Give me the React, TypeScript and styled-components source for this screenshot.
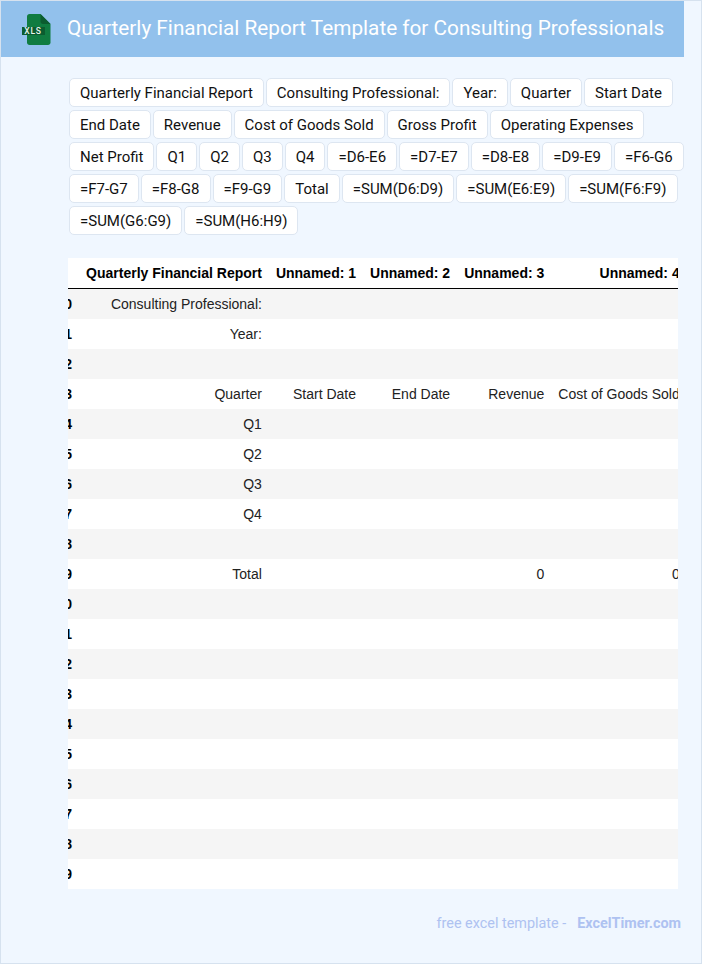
import React from "react";
import styled, { createGlobalStyle } from "styled-components";

const GlobalStyle = createGlobalStyle`
  html, body {
    margin: 0;
    padding: 0;
    background: #f0f7ff;
  }
`;

const Page = styled.div`
  box-sizing: border-box;
  width: 702px;
  height: 964px;
  overflow: hidden;
  background: #f0f7ff;
  border: 1px solid #d6e2ef;
  font-family: Roboto, sans-serif;
`;

const Header = styled.header`
  width: 683px;
  height: 56px;
  display: flex;
  align-items: center;
  background: #92c1ec;
`;

const LogoBox = styled.div`
  width: 66px;
  padding-left: 21px;
  box-sizing: border-box;
  display: flex;
  align-items: center;
`;

const Title = styled.h1`
  margin: 0 0 3px;
  font-size: 20.75px;
  font-weight: 400;
  color: #fff;
  white-space: nowrap;
`;

const Chips = styled.div`
  display: flex;
  flex-wrap: wrap;
  gap: 3px 2px;
  width: 620px;
  margin: 21px 0 0 68px;
`;

const Chip = styled.span`
  box-sizing: border-box;
  height: 29px;
  padding: 0 10px;
  display: flex;
  align-items: center;
  background: #fff;
  border: 1px solid #dde6f1;
  border-radius: 5px;
  font-size: 15px;
  color: #111;
  white-space: nowrap;
`;

const TableClip = styled.div`
  width: 610px;
  margin: 23px 0 0 67px;
  overflow: hidden;
`;

const Table = styled.table`
  margin-left: -18.5px;
  border-collapse: separate;
  border-spacing: 0;
  background: #fff;
  font-family: "Liberation Sans", Arial, sans-serif;
  font-size: 14px;
  color: #222;
  white-space: nowrap;
`;

const HeadCell = styled.th`
  height: 31px;
  padding: 0 7px;
  box-sizing: border-box;
  text-align: right;
  font-weight: 700;
  color: #000;
  border-bottom: 1px solid #000;
`;

const Row = styled.tr<{ $shaded: boolean }>`
  background: ${({ $shaded }) => ($shaded ? "#f5f5f5" : "#fff")};
`;

const IndexCell = styled.th`
  height: 30px;
  padding: 0 7px;
  box-sizing: border-box;
  text-align: right;
  font-weight: 700;
  color: #000;
`;

const Cell = styled.td`
  height: 30px;
  padding: 0 7px;
  box-sizing: border-box;
  text-align: right;
`;

const Footer = styled.footer`
  display: flex;
  justify-content: flex-end;
  gap: 11px;
  width: 680px;
  margin-top: 26px;
  font-size: 14.4px;
  line-height: 18px;
  color: #aec2f1;
`;

const FooterLink = styled.span`
  font-weight: 700;
`;

const chips = [
  "Quarterly Financial Report", "Consulting Professional:", "Year:", "Quarter", "Start Date",
  "End Date", "Revenue", "Cost of Goods Sold", "Gross Profit", "Operating Expenses",
  "Net Profit", "Q1", "Q2", "Q3", "Q4", "=D6-E6", "=D7-E7", "=D8-E8", "=D9-E9", "=F6-G6",
  "=F7-G7", "=F8-G8", "=F9-G9", "Total", "=SUM(D6:D9)", "=SUM(E6:E9)", "=SUM(F6:F9)",
  "=SUM(G6:G9)", "=SUM(H6:H9)",
];

const columns = ["Quarterly Financial Report", "Unnamed: 1", "Unnamed: 2", "Unnamed: 3", "Unnamed: 4", "Unnamed: 5"];

const rows: Record<number, string[]> = {
  10: ["Consulting Professional:"],
  11: ["Year:"],
  13: ["Quarter", "Start Date", "End Date", "Revenue", "Cost of Goods Sold", "Gross Profit"],
  14: ["Q1"],
  15: ["Q2"],
  16: ["Q3"],
  17: ["Q4"],
  19: ["Total", "", "", "0", "0", "0"],
};

const indexes = Array.from({ length: 20 }, (_, i) => i + 10);

const XlsIcon = () => (
  <svg width="29" height="31" viewBox="0 0 29 31">
    <path
      d="M5 2.5C5 1.1 6.1 0 7.5 0H18.5L28.5 10V28.5C28.5 29.9 27.4 31 26 31H7.5C6.1 31 5 29.9 5 28.5Z"
      fill="#107c41"
    />
    <path d="M18.5 0L28.5 10H21C19.6 10 18.5 8.9 18.5 7.5Z" fill="#0b5c30" />
    <rect x="0" y="13" width="23" height="8" fill="#0b5c30" />
    <text
      x="11"
      y="20"
      textAnchor="middle"
      fontFamily="Roboto, sans-serif"
      fontSize="8.5"
      fontWeight="500"
      letterSpacing="0.8"
      fill="#e8f5ec"
    >
      XLS
    </text>
  </svg>
);

const App = () => {
  return (
    <Page>
      <GlobalStyle />
      <Header>
        <LogoBox>
          <XlsIcon />
        </LogoBox>
        <Title>Quarterly Financial Report Template for Consulting Professionals</Title>
      </Header>
      <Chips>
        {chips.map((c) => (
          <Chip key={c}>{c}</Chip>
        ))}
      </Chips>
      <TableClip>
        <Table>
          <thead>
            <tr>
              <HeadCell />
              {columns.map((c) => (
                <HeadCell key={c}>{c}</HeadCell>
              ))}
            </tr>
          </thead>
          <tbody>
            {indexes.map((n, i) => (
              <Row key={n} $shaded={i % 2 === 0}>
                <IndexCell>{n}</IndexCell>
                {columns.map((c, j) => (
                  <Cell key={c}>{rows[n]?.[j] ?? ""}</Cell>
                ))}
              </Row>
            ))}
          </tbody>
        </Table>
      </TableClip>
      <Footer>
        <span>free excel template -</span>
        <FooterLink>ExcelTimer.com</FooterLink>
      </Footer>
    </Page>
  );
};

export default App;
